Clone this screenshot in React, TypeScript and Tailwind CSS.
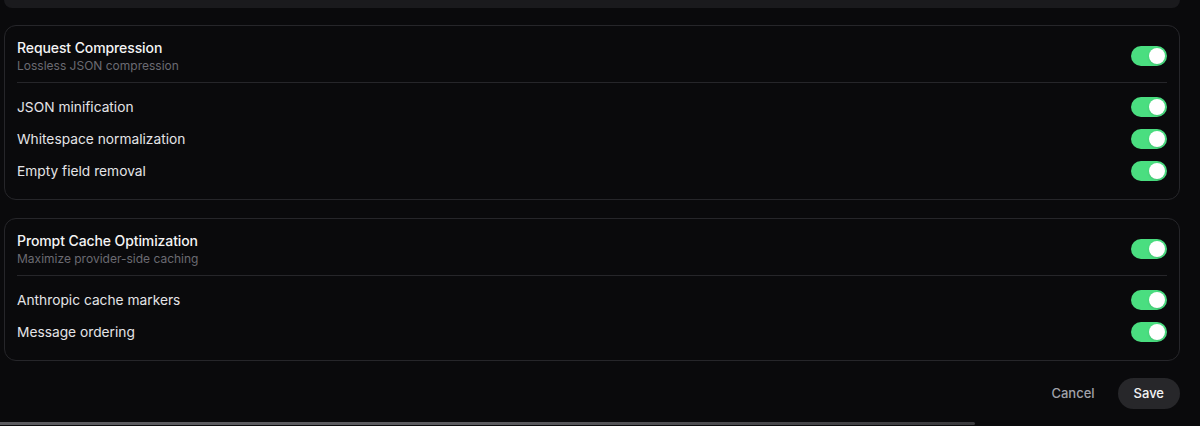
import { useState } from "react"

type Item = { id: string; label: string }

const sections: { id: string; title: string; description: string; items: Item[] }[] = [
  {
    id: "compression",
    title: "Request Compression",
    description: "Lossless JSON compression",
    items: [
      { id: "minify", label: "JSON minification" },
      { id: "whitespace", label: "Whitespace normalization" },
      { id: "empty", label: "Empty field removal" },
    ],
  },
  {
    id: "cache",
    title: "Prompt Cache Optimization",
    description: "Maximize provider-side caching",
    items: [
      { id: "markers", label: "Anthropic cache markers" },
      { id: "ordering", label: "Message ordering" },
    ],
  },
]

function Toggle({ checked, onChange }: { checked: boolean; onChange: (v: boolean) => void }) {
  return (
    <button
      type="button"
      role="switch"
      aria-checked={checked}
      onClick={() => onChange(!checked)}
      className={`relative h-5 w-9 shrink-0 rounded-full transition-colors ${
        checked ? "bg-[#4ade80]" : "bg-[#3f3f46]"
      }`}
    >
      <span
        className={`absolute top-[2px] h-4 w-4 rounded-full bg-white shadow transition-all ${
          checked ? "left-[18px]" : "left-[2px]"
        }`}
      />
    </button>
  )
}

export default function App() {
  const [enabled, setEnabled] = useState<Record<string, boolean>>({
    compression: true,
    minify: true,
    whitespace: true,
    empty: true,
    cache: true,
    markers: true,
    ordering: true,
  })

  const set = (id: string) => (v: boolean) => setEnabled((s) => ({ ...s, [id]: v }))

  return (
    <div
      className="relative h-[426px] w-[1200px] overflow-hidden bg-[#0a0a0c] text-white"
      style={{ fontFamily: "Inter, 'Noto Sans', sans-serif" }}
    >
      <div className="flex flex-col pl-1 pr-5">
        {/* previous card, cut off */}
        <div className="h-2 rounded-b-xl bg-[#1a1a1d]" />

        <div className="mt-[17px] flex flex-col gap-[18px]">
          {sections.map((section) => (
            <div key={section.id} className="rounded-xl border border-[#26262a] px-3 pt-3 pb-3">
              <div className="flex items-center justify-between border-b border-[#26262a] pb-2">
                <div>
                  <div className="text-[14px] leading-5 font-medium tracking-[-0.1px] text-[#f4f4f5]">
                    {section.title}
                  </div>
                  <div className="text-[12px] leading-4 text-[#6b6b72]">{section.description}</div>
                </div>
                <Toggle checked={enabled[section.id]} onChange={set(section.id)} />
              </div>
              <div className="mt-2 flex flex-col">
                {section.items.map((item) => (
                  <div key={item.id} className="flex h-8 items-center justify-between">
                    <span className="text-[13.75px] leading-5 text-[#e4e4e7]">{item.label}</span>
                    <Toggle checked={enabled[item.id]} onChange={set(item.id)} />
                  </div>
                ))}
              </div>
            </div>
          ))}
        </div>

        {/* Footer */}
        <div className="mt-[17px] flex items-center justify-end gap-[11px]">
          <button className="h-[31px] px-3 text-[13px] font-medium text-[#a1a1aa]">Cancel</button>
          <button className="h-[31px] rounded-full bg-[#27272a] px-4 text-[13px] font-medium text-[#f4f4f5]">
            Save
          </button>
        </div>
      </div>

      {/* horizontal scroll indicator */}
      <div className="absolute bottom-[1px] left-0 h-[3px] w-[975px] rounded-r-full bg-gradient-to-r from-[#5c5c60] via-[#5c5c60] to-[#3a3a3d]" />
    </div>
  )
}
